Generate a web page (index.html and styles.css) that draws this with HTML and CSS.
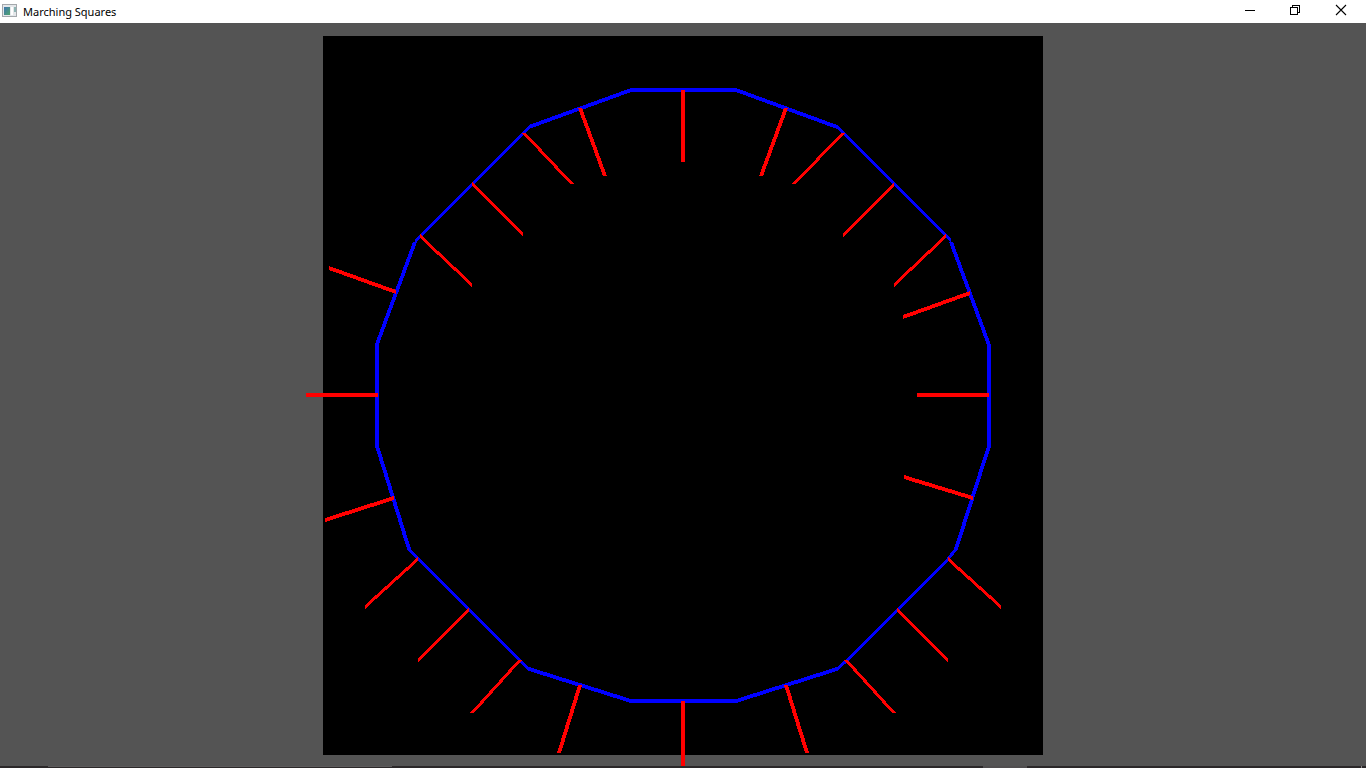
FILE: index.html
```html
<!DOCTYPE html>
<html lang="en">
<head>
<meta charset="utf-8">
<title>Marching Squares</title>
<link rel="stylesheet" href="styles.css">
</head>
<body>
<div class="window">
  <header class="titlebar">
    <svg class="app-icon" viewBox="0 0 16 16" aria-hidden="true" shape-rendering="crispEdges">
      <defs>
        <linearGradient id="pane" x1="0" y1="0" x2="1" y2="1">
          <stop offset="0" stop-color="#3f74b0"/>
          <stop offset="1" stop-color="#4fa56c"/>
        </linearGradient>
      </defs>
      <rect x="0" y="0" width="15" height="13" fill="#a4a8ac"/>
      <rect x="1" y="1" width="13" height="11" fill="#e4e7ea"/>
      <rect x="2" y="3" width="6" height="8" fill="url(#pane)"/>
      <rect x="9" y="3" width="2" height="8" fill="#ffffff"/>
      <rect x="12" y="3" width="2" height="5" fill="#8fb5b4"/>
    </svg>
    <h1 class="title">Marching Squares</h1>
    <div class="controls">
      <button class="control" type="button" aria-label="Minimize">
        <svg class="glyph" viewBox="0 0 10 10" shape-rendering="crispEdges"><path d="M1 5h10v1H1z"/></svg>
      </button>
      <button class="control" type="button" aria-label="Restore">
        <svg class="glyph" viewBox="0 0 10 10" shape-rendering="crispEdges"><path fill-rule="evenodd" d="M0 2h8v8H0zM1 3v6h6V3zM2 0h8v8H8V7h1V1H3v1H2z"/></svg>
      </button>
      <button class="control" type="button" aria-label="Close">
        <svg class="glyph" viewBox="0 0 10 10"><path class="cross" d="M0 0L10 10M10 0L0 10"/></svg>
      </button>
    </div>
  </header>
  <main class="stage">
    <svg class="canvas" viewBox="323 36 720 719" role="img" aria-label="Circle contour with normals" shape-rendering="crispEdges">
      <rect x="323" y="36" width="720" height="719"/>
      <g class="contour">
        <path d="M630 88H737v4H630z"/>
        <path d="M736 88L837 125v4L736 92z"/>
        <path d="M837 125L951 239v4L837 129z"/>
        <path d="M949 242L987 345h4L953 242z"/>
        <path d="M987 345V447h4V345z"/>
        <path d="M987 446L954 549h4L991 446z"/>
        <path d="M954 549L947 558h4L958 549z"/>
        <path d="M949 556L845 660v4L949 560z"/>
        <path d="M845 660L837 667v4L845 664z"/>
        <path d="M837 667L736 699v4L837 671z"/>
        <path d="M630 699H737v4H630z"/>
        <path d="M631 699L529 667v4L631 703z"/>
        <path d="M529 667L521 660v4L529 671z"/>
        <path d="M521 660L417 556v4L521 664z"/>
        <path d="M415 558L407 549h4L419 558z"/>
        <path d="M407 549L375 446h4L411 549z"/>
        <path d="M375 447V344h4V447z"/>
        <path d="M375 344L413 242h4L379 344z"/>
        <path d="M415 239L529 125v4L415 243z"/>
        <path d="M529 125L631 88v4L529 129z"/>
      </g>
      <g class="normals">
        <path d="M681 90h4v72h-4z"/>
        <path d="M578 108L603 176h4L582 108z"/>
        <path d="M522 133L570 184h4L526 133z"/>
        <path d="M472 182L523 233v4L472 186z"/>
        <path d="M420 234L472 283v4L420 238z"/>
        <path d="M329 266L396 290v4L329 270z"/>
        <path d="M306 393H378v4H306z"/>
        <path d="M325 518L394 496v4L325 522z"/>
        <path d="M365 605L418 557v4L365 609z"/>
        <path d="M418 658L469 607v4L418 662z"/>
        <path d="M470 713L518 660h4L474 713z"/>
        <path d="M557 753L578 685h4L561 753z"/>
        <path d="M681 701h4v65h-4z"/>
        <path d="M784 685L805 753h4L788 685z"/>
        <path d="M844 660L892 713h4L848 660z"/>
        <path d="M897 608L948 659v4L897 612z"/>
        <path d="M948 557L1001 605v4L948 561z"/>
        <path d="M904 475L973 496v4L904 479z"/>
        <path d="M917 393H989v4H917z"/>
        <path d="M903 315L970 291v4L903 319z"/>
        <path d="M894 283L946 234v4L894 287z"/>
        <path d="M843 233L894 182v4L843 237z"/>
        <path d="M792 184L841 133h4L796 184z"/>
        <path d="M759 176L784 108h4L763 176z"/>
      </g>
    </svg>
  </main>
  <footer class="taskbar">
    <span class="task-start"></span>
    <span class="task-search"></span>
    <span class="task-apps"></span>
    <span class="task-active"></span>
    <span class="task-tray"></span>
    <span class="task-divider"></span>
    <span class="task-end"></span>
  </footer>
</div>
</body>
</html>
```
FILE: styles.css
```css
* { box-sizing: border-box; }
body { margin: 0; }
.window {
  display: flex;
  flex-direction: column;
  height: 100vh;
  overflow: hidden;
  background: #545454;
  font-family: "Segoe UI", "Noto Sans", "Open Sans", sans-serif;
}
.titlebar {
  display: flex;
  align-items: center;
  flex: none;
  height: 23px;
  padding-left: 2px;
  background: #fff;
  color: #000;
}
.app-icon { width: 16px; height: 16px; margin-right: 5px; }
.title { flex: 1; margin: 0; font-size: 11px; font-weight: 400; line-height: 23px; }
.controls { display: flex; height: 100%; padding-right: 2px; }
.control {
  display: flex;
  justify-content: center;
  width: 46px;
  padding: 5px 0 0;
  border: 0;
  background: transparent;
}
.glyph { width: 10px; height: 10px; overflow: visible; }
.cross { fill: none; stroke: #000; stroke-width: 1.1; }
.stage {
  display: flex;
  justify-content: center;
  flex: 1;
  min-height: 0;
  padding: 13px 0 11px;
}
.canvas { height: 100%; aspect-ratio: 720 / 719; overflow: visible; }
.contour { fill: #00f; }
.normals { fill: #f00; }
.taskbar { display: flex; flex: none; height: 2px; background: #2b2829; }
.task-start { width: 48px; }
.task-search { width: 344px; border-top: 1px solid #5c5a5b; }
.task-apps { width: 591px; }
.task-active { width: 44px; background: #504e4f; }
.task-tray { flex: 1; }
.task-divider { width: 1px; background: #8a8889; }
.task-end { width: 4px; }
```
